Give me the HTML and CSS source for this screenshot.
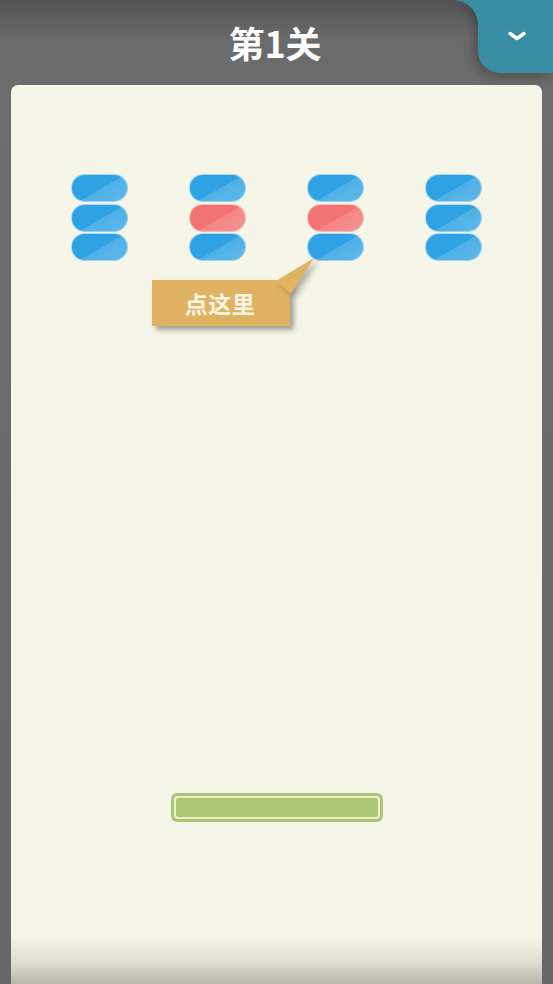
FILE: index.html
```html
<!DOCTYPE html>
<html lang="zh">
<head>
<meta charset="utf-8">
<title>第1关</title>
<link rel="stylesheet" href="styles.css">
</head>
<body>
<div class="screen">
  <header class="topbar">
    <h1 class="level-title">第1关</h1>
    <button class="menu-tab" aria-label="菜单">
      <svg width="22" height="14" viewBox="0 0 22 14"><path d="M4 4.5 L11 9.5 L18 4.5" fill="none" stroke="#fff" stroke-width="3.4" stroke-linecap="round" stroke-linejoin="round"/></svg>
    </button>
  </header>
  <main class="board">
    <div class="tubes">
      <div class="tube"><span class="pill blue"></span><span class="pill blue"></span><span class="pill blue"></span></div>
      <div class="tube"><span class="pill blue"></span><span class="pill red"></span><span class="pill blue"></span></div>
      <div class="tube"><span class="pill blue"></span><span class="pill red"></span><span class="pill blue"></span></div>
      <div class="tube"><span class="pill blue"></span><span class="pill blue"></span><span class="pill blue"></span></div>
    </div>
    <div class="hint">
      <svg class="hint-tail" width="50" height="40" viewBox="0 0 50 40"><polygon points="11,24 49,1 26,37" fill="#e0b362"/></svg>
      <span class="hint-text">点这里</span>
    </div>
    <div class="progress"><div class="progress-inner"></div></div>
    <div class="board-fade"></div>
  </main>
</div>
</body>
</html>
```
FILE: styles.css
```css
* { box-sizing: border-box; }
html, body { margin: 0; padding: 0; }
body {
  width: 553px;
  height: 984px;
  overflow: hidden;
  background: linear-gradient(#545454 0px, #6a6a6a 40px, #6c6c6c 85px, #676767 100%);
  font-family: "Noto Sans CJK SC", "Noto Sans", sans-serif;
}
.screen {
  position: relative;
  height: 984px;
  display: flex;
  flex-direction: column;
}
.topbar {
  position: relative;
  height: 85px;
  flex: none;
  display: flex;
  justify-content: center;
}
.level-title {
  margin: 17px 0 0 -3px;
  color: #fff;
  font-size: 36px;
  font-weight: 700;
  line-height: 50px;
  letter-spacing: 0;
}
/* menu tab hanging from the top edge, with a concave flare on its left */
.menu-tab {
  position: absolute;
  top: 0;
  right: 0;
  width: 75px;
  height: 73px;
  border: none;
  padding: 0;
  background: #3a8ea3;
  border-bottom-left-radius: 22px;
  filter: drop-shadow(-3px 4px 6px rgba(40, 40, 40, 0.45));
  display: flex;
  align-items: center;
  justify-content: center;
}
.menu-tab::before {
  content: "";
  position: absolute;
  left: -25px;
  top: 0;
  width: 25px;
  height: 25px;
  background: radial-gradient(circle at 0 100%, transparent 24.5px, #3a8ea3 25.5px);
}
.menu-tab svg { margin: -2px 0 0 2px; }
.board {
  position: relative;
  margin: 0 11px 0 11px;
  flex: 1;
  background: #f5f6e8;
  border-radius: 7px 7px 0 0;
  overflow: hidden;
  display: flex;
  flex-direction: column;
  align-items: center;
}
.tubes {
  margin-top: 89px;
  display: flex;
  gap: 61px;
}
.tube {
  display: flex;
  flex-direction: column;
  gap: 1.5px;
}
.pill {
  display: block;
  width: 57px;
  height: 28px;
  border-radius: 14px;
  border: 1px solid rgba(255, 255, 255, 0.5);
}
.pill.blue {
  background:
    linear-gradient(150deg, rgba(255,255,255,0) 52%, rgba(255,255,255,0.16) 54%, rgba(255,255,255,0.24) 100%),
    #2ea2e3;
}
.pill.red {
  background:
    linear-gradient(150deg, rgba(255,255,255,0) 52%, rgba(255,255,255,0.14) 54%, rgba(255,255,255,0.22) 100%),
    #f27373;
}
.hint {
  position: absolute;
  left: 141px;
  top: 195px;
  width: 138px;
  height: 46px;
  background: #e0b362;
  box-shadow: 4px 4px 5px rgba(60, 60, 50, 0.45);
  display: flex;
  align-items: center;
  justify-content: center;
}
.hint-tail {
  position: absolute;
  left: 113px;
  top: -23px;
  filter: drop-shadow(4px 3px 3px rgba(60, 60, 50, 0.4));
}
.hint-text {
  position: relative;
  color: #fdf6e4;
  font-size: 23px;
  font-weight: 700;
  letter-spacing: 0.5px;
  margin: 0 2px 0 0;
}
.progress {
  margin-top: 532px;
  width: 212px;
  height: 29px;
  border-radius: 6px;
  background: #a9c577;
  padding: 3px;
}
.progress-inner {
  height: 100%;
  border: 2px solid #e9f2c8;
  border-radius: 4px;
  background: #abc777;
}
.board-fade {
  position: absolute;
  left: 0;
  right: 0;
  bottom: 0;
  height: 48px;
  background: linear-gradient(rgba(180,180,165,0) 0%, rgba(195,195,180,0.45) 55%, rgba(170,170,158,0.85) 100%);
  -webkit-mask-image: linear-gradient(90deg, #000 0, #000 100%);
}
```
